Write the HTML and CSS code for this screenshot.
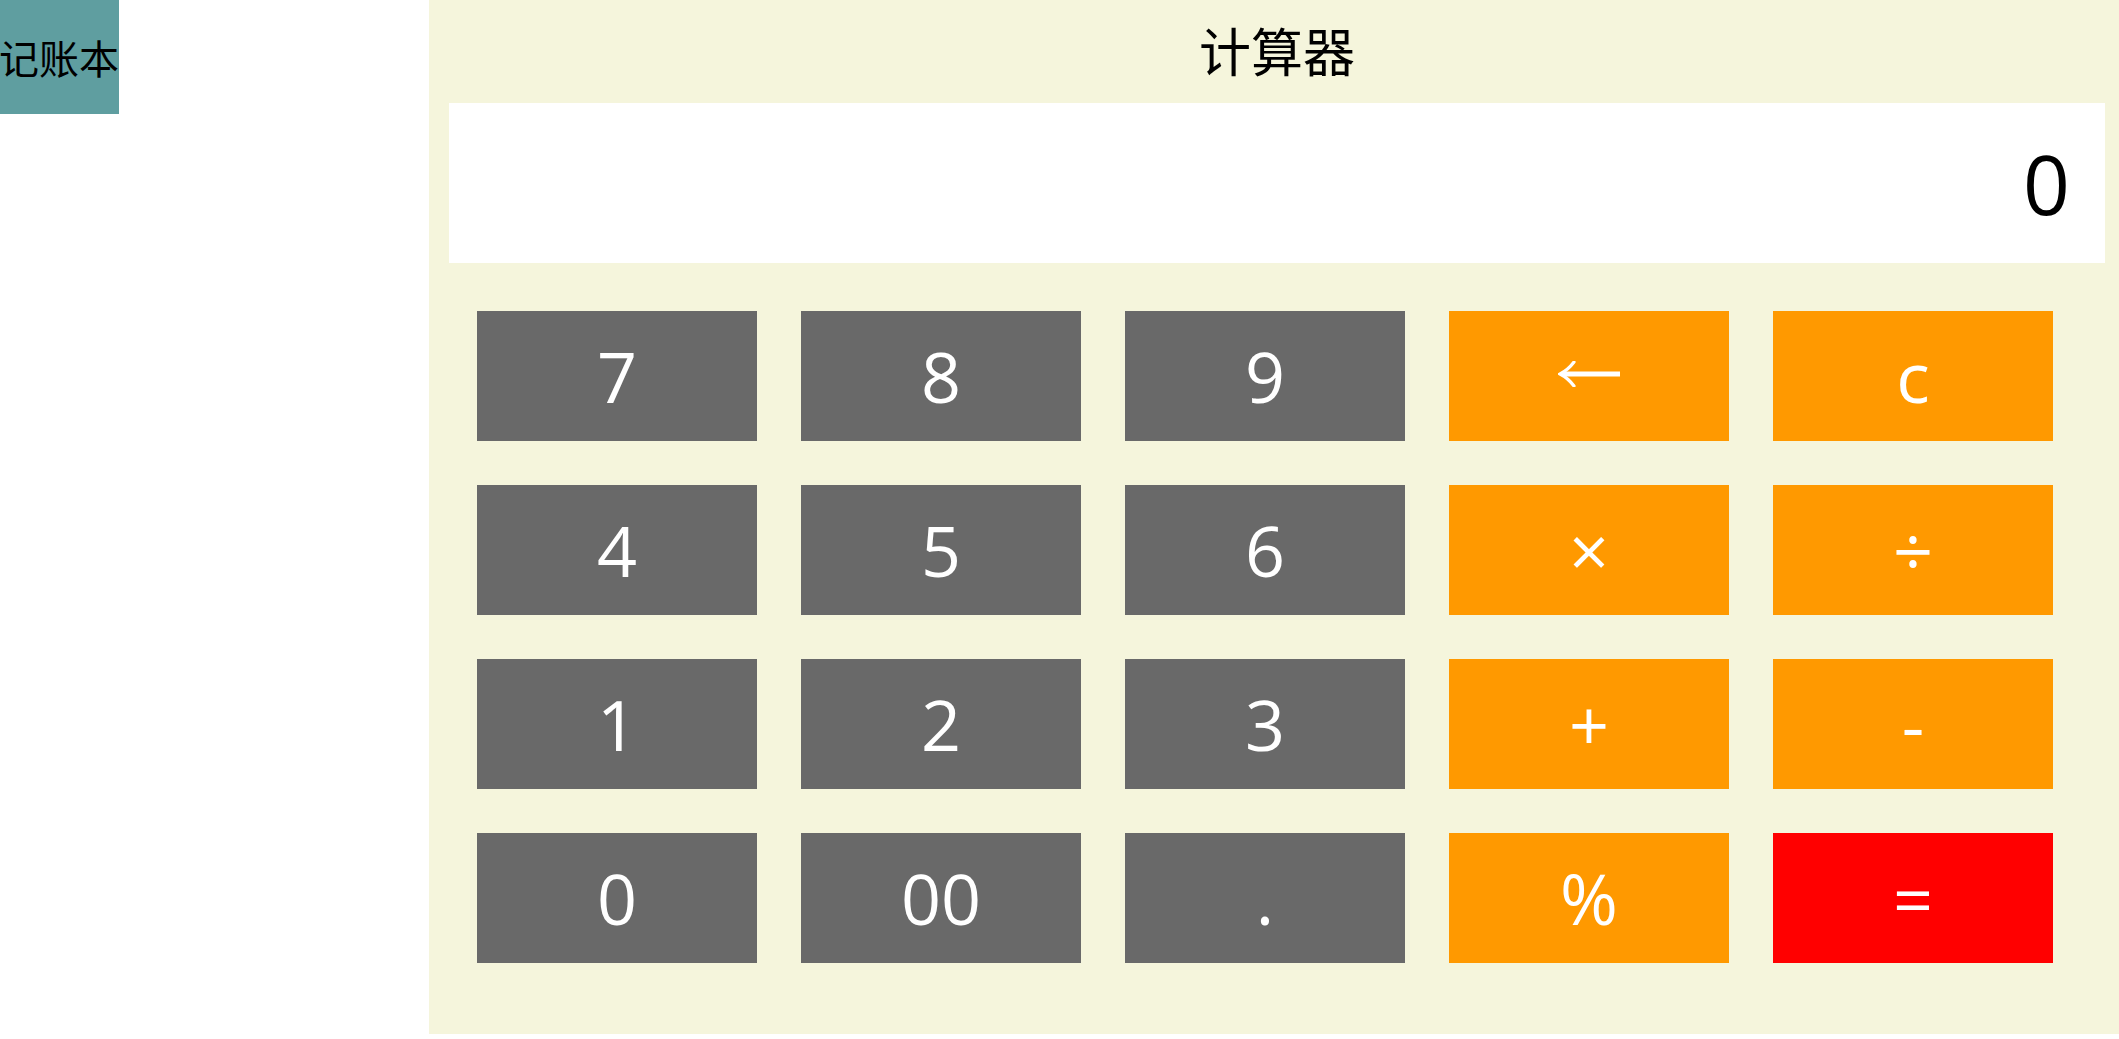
FILE: index.html
```html
<!DOCTYPE html>
<html lang="zh">
<head>
<meta charset="utf-8">
<title>计算器</title>
<link rel="stylesheet" href="styles.css">
</head>
<body>
<div class="page">
  <aside class="side">
    <div class="ledger">记账本</div>
  </aside>
  <main class="calc">
    <h1 class="title">计算器</h1>
    <div class="display">0</div>
    <div class="keys">
      <div class="key num">7</div>
      <div class="key num">8</div>
      <div class="key num">9</div>
      <div class="key op"><svg class="arrow" width="62" height="26" viewBox="0 0 62 26"><path d="M5 13 H62" stroke="#fff" stroke-width="5" fill="none"/><path d="M16 1 Q10 9 2 13 Q10 17 16 25" stroke="#fff" stroke-width="3.2" fill="none" stroke-linecap="round"/></svg></div>
      <div class="key op">c</div>
      <div class="key num">4</div>
      <div class="key num">5</div>
      <div class="key num">6</div>
      <div class="key op">×</div>
      <div class="key op">÷</div>
      <div class="key num">1</div>
      <div class="key num">2</div>
      <div class="key num">3</div>
      <div class="key op">+</div>
      <div class="key op">-</div>
      <div class="key num">0</div>
      <div class="key num">00</div>
      <div class="key num">.</div>
      <div class="key op">%</div>
      <div class="key eq">=</div>
    </div>
  </main>
</div>
</body>
</html>
```

FILE: styles.css
```css
html, body {
  margin: 0;
  padding: 0;
  background: #ffffff;
}

body {
  font-family: "Open Sans", "Noto Sans", "Noto Sans CJK SC", sans-serif;
}

.page {
  display: flex;
  align-items: flex-start;
}

.side {
  width: 429px;
  flex: none;
}

.ledger {
  width: 119px;
  height: 114px;
  background: #5f9ea0;
  color: #000;
  font-family: "Noto Sans CJK SC", sans-serif;
  font-size: 40px;
  display: flex;
  align-items: center;
  justify-content: flex-start;
  white-space: nowrap;
  text-indent: -1px;
}

.calc {
  flex: 1;
  background: #f5f5dc;
  padding: 0 14px 70px 20px;
  box-sizing: border-box;
  height: 1034px;
}

.title {
  margin: 0;
  height: 103px;
  line-height: 100px;
  font-size: 52px;
  font-weight: normal;
  text-align: center;
  color: #000;
  font-family: "Noto Sans CJK SC", sans-serif;
}

.display {
  height: 160px;
  background: #ffffff;
  color: #000;
  font-size: 82px;
  display: flex;
  align-items: center;
  justify-content: flex-end;
  padding-right: 35px;
  line-height: 1;
}

.keys {
  display: grid;
  grid-template-columns: repeat(5, 280px);
  grid-auto-rows: 130px;
  column-gap: 44px;
  row-gap: 44px;
  padding: 48px 0 0 28px;
}

.key {
  display: flex;
  align-items: center;
  justify-content: center;
  color: #ffffff;
  font-size: 70px;
  line-height: 1;
}

.num {
  background: #696969;
}

.op {
  background: #ff9900;
}

.eq {
  background: #ff0000;
}

.arrow {
  display: block;
  margin-top: -4px;
}
```
